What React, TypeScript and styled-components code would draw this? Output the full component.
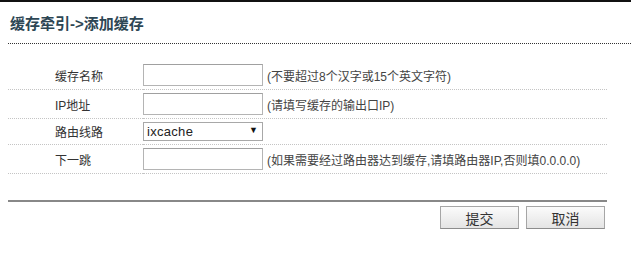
import React, { useState } from "react";
import styled, { createGlobalStyle } from "styled-components";

const GlobalStyle = createGlobalStyle`
  html, body {
    margin: 0;
    padding: 0;
    background: #ffffff;
  }
  body {
    font-family: "Liberation Sans", "Noto Sans CJK SC", sans-serif;
    font-size: 12px;
    color: #333;
  }
`;

interface FieldRow {
  label: string;
  hint?: string;
}

const fields: FieldRow[] = [
  { label: "缓存名称", hint: "(不要超过8个汉字或15个英文字符)" },
  { label: "IP地址", hint: "(请填写缓存的输出口IP)" },
];

const App: React.FC = () => {
  const [name, setName] = useState<string>("");
  const [ip, setIp] = useState<string>("");
  const [route, setRoute] = useState<string>("ixcache");
  const [nextHop, setNextHop] = useState<string>("");

  const values = [name, ip];
  const setters = [setName, setIp];

  return (
    <Page>
      <GlobalStyle />
      <Header>
        <Title>缓存牵引-&gt;添加缓存</Title>
      </Header>

      <FormTable>
        <tbody>
          {fields.map((f, i) => (
            <Row key={f.label}>
              <LabelCell>{f.label}</LabelCell>
              <FieldCell>
                <InputBox value={values[i]} onChange={(e) => setters[i](e.target.value)} />
                <Hint>{f.hint}</Hint>
              </FieldCell>
            </Row>
          ))}
          <Row>
            <LabelCell>路由线路</LabelCell>
            <FieldCell>
              <SelectWrap>
                <SelectBox value={route} onChange={(e) => setRoute(e.target.value)}>
                  <option value="ixcache">ixcache</option>
                </SelectBox>
                <Arrow>▼</Arrow>
              </SelectWrap>
            </FieldCell>
          </Row>
          <Row>
            <LabelCell>下一跳</LabelCell>
            <FieldCell>
              <InputBox value={nextHop} onChange={(e) => setNextHop(e.target.value)} />
              <Hint>(如果需要经过路由器达到缓存,请填路由器IP,否则填0.0.0.0)</Hint>
            </FieldCell>
          </Row>
        </tbody>
      </FormTable>

      <Footer>
        <Button>提交</Button>
        <Button>取消</Button>
      </Footer>
    </Page>
  );
};

export default App;

/* Styled */

const Page = styled.div`
  width: 631px;
  height: 261px;
  box-sizing: border-box;
  border-top: 2px solid #111;
`;
const Header = styled.div`
  margin-left: 8px;
  padding: 12px 0 9px 2px;
  border-bottom: 1px dotted #333;
`;
const Title = styled.h2`
  margin: 0;
  font-size: 15px;
  line-height: 20px;
  font-weight: bold;
  color: #2d4654;
`;
const FormTable = styled.table`
  margin: 17px 24px 0 8px;
  width: 599px;
  border-collapse: collapse;
`;
const Row = styled.tr`
  border-bottom: 1px dotted #c4c4c4;
`;
const LabelCell = styled.td`
  width: 135px;
  box-sizing: border-box;
  padding: 3px 0 3px 47px;
  vertical-align: middle;
  color: #333;
  font-size: 12px;
`;
const FieldCell = styled.td`
  padding: 3px 0;
  vertical-align: middle;
  display: flex;
  align-items: center;
`;
const InputBox = styled.input`
  width: 120px;
  height: 22px;
  box-sizing: border-box;
  border: 1px solid #b4b4b4;
  border-top-color: #a0a0a0;
  padding: 0 4px;
  font-size: 12px;
  outline: none;
  background: #fff;
`;
const Hint = styled.span`
  margin-left: 4px;
  color: #444;
  font-size: 12px;
  white-space: nowrap;
`;
const SelectWrap = styled.div`
  position: relative;
  width: 120px;
  height: 19px;
`;
const SelectBox = styled.select`
  appearance: none;
  width: 120px;
  height: 19px;
  box-sizing: border-box;
  border: 1px solid #a8a8a8;
  border-radius: 0;
  background: #fff;
  padding: 0 0 0 3px;
  font-family: "Liberation Sans", sans-serif;
  font-size: 13px;
  letter-spacing: 0.3px;
  color: #222;
  outline: none;
`;
const Arrow = styled.span`
  position: absolute;
  right: 5px;
  top: 3px;
  font-size: 9px;
  color: #111;
  pointer-events: none;
`;
const Footer = styled.div`
  margin: 26px 24px 0 8px;
  padding: 4px 2px 0 0;
  border-top: 2px solid #888;
  display: flex;
  justify-content: flex-end;
  gap: 7px;
`;
const Button = styled.button`
  width: 79px;
  height: 23px;
  box-sizing: border-box;
  border: 1px solid #a6a6a6;
  border-bottom-color: #8c8c8c;
  background: linear-gradient(#fbfbfb, #e4e4e4);
  color: #333;
  font-family: "Liberation Sans", "Noto Sans CJK SC", sans-serif;
  font-size: 14px;
  padding: 0;
  cursor: pointer;
`;
